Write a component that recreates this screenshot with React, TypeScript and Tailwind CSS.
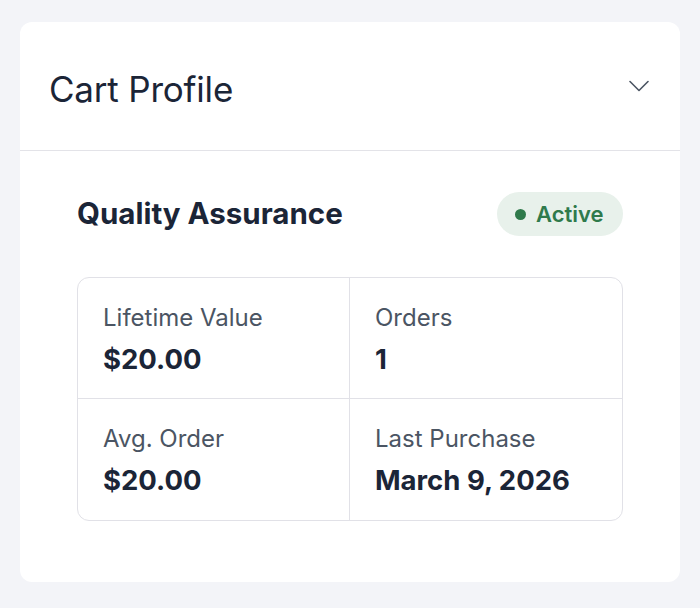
import React from "react";

const stats = [
  { label: "Lifetime Value", value: "$20.00" },
  { label: "Orders", value: "1" },
  { label: "Avg. Order", value: "$20.00" },
  { label: "Last Purchase", value: "March 9, 2026" },
];

export default function App() {
  return (
    <div
      className="min-h-[608px] w-[700px] bg-[#f3f4f8] px-[20px] pt-[22px] pb-[26px]"
      style={{ fontFamily: "Inter, 'Noto Sans', sans-serif" }}
    >
      <div className="rounded-[12px] bg-white">
        <div className="flex h-[129px] items-center justify-between border-b border-[#e3e3e8] pl-[29px] pr-[31px]">
          <h2 className="mt-[6px] text-[35px] font-normal leading-none tracking-[-0.2px] text-[#1b2537]">Cart Profile</h2>
          <svg width="20" height="12" viewBox="0 0 20 12" fill="none" className="mt-[-1px]">
            <path d="M1 1.5 L10 10.5 L19 1.5" stroke="#4b5563" strokeWidth="1.6" strokeLinecap="round" strokeLinejoin="round" />
          </svg>
        </div>
        <div className="px-[57px] pt-[41px] pb-[61px]">
          <div className="flex h-[44px] items-center justify-between">
            <h3 className="text-[29.5px] font-bold leading-none text-[#1b2537]">Quality Assurance</h3>
            <div className="flex h-[44px] w-[126px] items-center gap-[10px] rounded-full bg-[#e8f1eb] pl-[18px]">
              <span className="h-[11px] w-[11px] rounded-full bg-[#2f7a4b]" />
              <span className="text-[22px] font-semibold leading-none text-[#2f7a4b]">Active</span>
            </div>
          </div>
          <div className="mt-[41px] grid grid-cols-2 overflow-hidden rounded-[12px] border border-[#e1e1e7]">
            {stats.map((s, i) => (
              <div
                key={s.label}
                className={
                  "flex h-[121px] flex-col gap-[10px] px-[25px] pt-[25px] " +
                  (i % 2 === 0 ? "border-r border-[#e1e1e7] " : "") +
                  (i < 2 ? "border-b border-[#e1e1e7]" : "")
                }
              >
                <span className="text-[24px] leading-[29px] text-[#4b5563]">{s.label}</span>
                <span className="text-[27.5px] font-bold leading-[34px] text-[#1b2537]">{s.value}</span>
              </div>
            ))}
          </div>
        </div>
      </div>
    </div>
  );
}
